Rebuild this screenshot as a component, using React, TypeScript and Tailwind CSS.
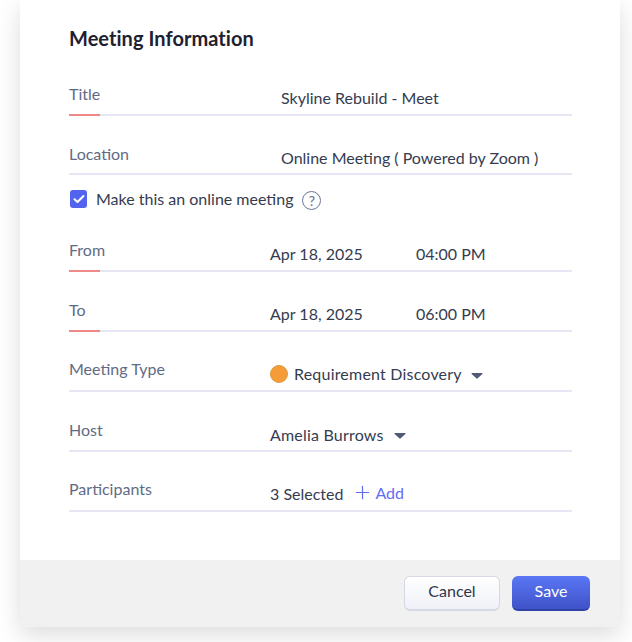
import { Plus } from "lucide-react";
import type { ReactNode } from "react";

function Row({ label, required, lift, className, children }: { label: string; required?: boolean; lift?: boolean; className?: string; children: ReactNode }) {
  return (
    <div className={`relative flex items-end border-b-2 border-[#e6e6f5] ${className ?? "h-[60px] pb-[5px]"}`}>
      <span className={`w-[201px] shrink-0 text-[16px] leading-[20px] text-[#5f6b85] ${lift ? "mb-[6px]" : "mb-[5px]"}`}>{label}</span>
      <div className="mb-[1px] flex flex-1 items-center text-[16px] leading-[20px] text-[#353c50]">{children}</div>
      {required && <div className="absolute bottom-[-2px] left-0 h-[2px] w-[31px] bg-[#ee8a8a]" />}
    </div>
  );
}

function Caret() {
  return (
    <svg width="12" height="6" viewBox="0 0 12 6" className="mt-[3px]">
      <path d="M1 0h10a.6.6 0 0 1 .4 1L6.4 5.6a.6.6 0 0 1-.8 0L.6 1A.6.6 0 0 1 1 0z" fill="#4f5b78" />
    </svg>
  );
}

export default function App() {
  return (
    <div className="h-[642px] w-[632px] bg-white pl-5 font-['Lato',sans-serif]">
      <div className="flex h-[627px] w-[600px] flex-col rounded-br-lg rounded-bl-lg bg-white shadow-[0_8px_24px_rgba(0,0,0,0.14)]">
        <div className="flex-1 pr-[48px] pl-[49px]">
          <h2 className="pt-[26px] text-[20px] leading-[24px] font-bold tracking-[0.05px] text-[#1e2130]">Meeting Information</h2>
          <div className="mt-[6px] flex flex-col">
            <Row label="Title" required>
              <span className="pl-[11px]">Skyline Rebuild - Meet</span>
            </Row>
            <Row label="Location" className="h-[59px] pb-[4px]">
              <span className="pl-[11px]">Online Meeting ( Powered by Zoom )</span>
            </Row>
            <div className="flex h-[37px] items-start pt-[14px] text-[16px] leading-[20px] text-[#353c50]">
              <span className="mt-[1px] ml-[1px] flex h-[18px] w-[17px] items-center justify-center rounded-[3px] bg-[#5263ee]">
                <svg width="12" height="10" viewBox="0 0 12 10" fill="none">
                  <path d="M1.5 5.2 4.5 8l6-6" stroke="#fff" strokeWidth="2" strokeLinecap="round" strokeLinejoin="round" />
                </svg>
              </span>
              <span className="ml-[9px]">Make this an online meeting</span>
              <span className="mt-[2px] ml-[9px] flex h-[19px] w-[19px] items-center justify-center rounded-full border-[1.5px] border-[#6c7794] text-[14px] leading-none font-medium text-[#6c7794]">?</span>
            </div>
            <Row label="From" required>
              <span className="w-[146px]">Apr 18, 2025</span>
              <span>04:00 PM</span>
            </Row>
            <Row label="To" required>
              <span className="w-[146px]">Apr 18, 2025</span>
              <span>06:00 PM</span>
            </Row>
            <Row label="Meeting Type" lift>
              <span className="mr-[6px] h-[18px] w-[18px] rounded-full border border-[#dd9a3e] bg-[#f59c38]" />
              <span className="mr-[9px] tracking-[0.2px]">Requirement Discovery</span>
              <Caret />
            </Row>
            <Row label="Host">
              <span className="mr-[10px] translate-y-[1px] tracking-[0.2px]">Amelia Burrows</span>
              <Caret />
            </Row>
            <Row label="Participants" lift>
              <span className="mr-[9px]">3 Selected</span>
              <span className="flex -translate-y-[1px] items-center gap-[2px] text-[#636cf2]">
                <Plus size={21} strokeWidth={1.4} />
                Add
              </span>
            </Row>
          </div>
        </div>
        <div className="flex h-[67px] items-start justify-end gap-[12px] rounded-br-lg rounded-bl-lg bg-[#f1f1f1] pt-[16px] pr-[30px]">
          <button className="h-[35px] w-[96px] rounded-[6px] border border-b-2 border-[#d5d9e6] bg-gradient-to-b from-white to-[#f0f1f8] pb-[4px] text-[16px] text-[#2f3648]">Cancel</button>
          <button className="h-[35px] w-[78px] rounded-[6px] border-b-2 border-[#2f43a8] bg-gradient-to-b from-[#5b77f5] to-[#3f52c8] pb-[4px] text-[16px] text-white">Save</button>
        </div>
      </div>
    </div>
  );
}
